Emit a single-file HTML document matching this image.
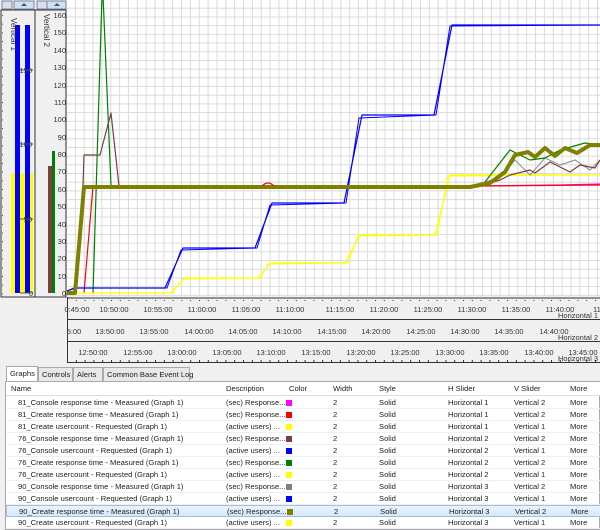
<!DOCTYPE html>
<html><head><meta charset="utf-8">
<style>
*{margin:0;padding:0;box-sizing:border-box}
body{width:600px;height:530px;overflow:hidden;background:#f0f0f0;font-family:"Liberation Sans",sans-serif;font-size:8px;color:#222;position:relative}
svg text{font-family:"Liberation Sans",sans-serif}
.tabs{position:absolute;left:3px;top:366px;height:16px}
.tab{position:absolute;top:1px;height:15px;border:1px solid #aaa;border-bottom:none;background:#e8e8e8;font-size:7.6px;line-height:13px;padding:0 3px;white-space:nowrap}
.tbl{position:absolute;left:5px;top:381px;width:595px;height:149px;background:#fff;border:1px solid #aaa}
.row{position:absolute;left:0;width:595px;height:12px;font-size:7.6px;line-height:12px;border-bottom:1px solid #eef0f3}
.row span{position:absolute;white-space:nowrap}
.hd{background:#fff;border-bottom:1px solid #ddd;height:14px;line-height:14px;top:0}
.sel{background:linear-gradient(#eaf3fd,#d6e8fb);border:1px solid #9bc0e8}
.sw{width:6px;height:6px;top:3px}
</style></head><body>
<svg width="600" height="366" style="position:absolute;left:0;top:0" xmlns="http://www.w3.org/2000/svg">
<defs>
<pattern id="g" x="67" y="0" width="8.85" height="8.7" patternUnits="userSpaceOnUse">
<path d="M8.35 0V8.7M0 8.2H8.85" stroke="#dadada" stroke-width="1" fill="none"/>
</pattern>
<pattern id="tk" x="67" y="0" width="8.8" height="30" patternUnits="userSpaceOnUse">
<path d="M0.5 0V3" stroke="#333" stroke-width="1"/>
</pattern>
<pattern id="vt" x="0" y="6.3" width="10" height="8.7" patternUnits="userSpaceOnUse">
<path d="M0 0.5H3" stroke="#555" stroke-width="1"/>
</pattern>
</defs>
<rect x="0" y="0" width="600" height="366" fill="#f0f0f0"/>
<rect x="67" y="0" width="533" height="296" fill="#fff"/>
<rect x="67" y="0" width="533" height="296" fill="url(#g)"/>
<rect x="1" y="10" width="34" height="287" fill="#f0f0f0" stroke="#333"/>
<rect x="35" y="10" width="31" height="287" fill="#f0f0f0" stroke="#333"/>
<rect x="2" y="1" width="10" height="8" fill="#dde" stroke="#789"/>
<rect x="14" y="1" width="20" height="8" fill="#cfe0f2" stroke="#789"/>
<path d="M21 6L24 3L27 6Z" fill="#456"/>
<rect x="37" y="1" width="10" height="8" fill="#dde" stroke="#789"/>
<rect x="47" y="1" width="19" height="8" fill="#cfe0f2" stroke="#789"/>
<path d="M54 6L57 3L60 6Z" fill="#456"/>
<rect x="11" y="173" width="22" height="120" fill="#ffff00"/>
<rect x="15" y="25" width="5" height="268" fill="#0000ff"/>
<rect x="25" y="25" width="5" height="268" fill="#0000ff"/>
<rect x="48" y="166" width="4" height="127" fill="#7b3f3f"/>
<rect x="52" y="151" width="3" height="142" fill="#008000"/>
<rect x="2" y="10" width="3" height="287" fill="url(#vt)"/>
<rect x="36" y="10" width="3" height="287" fill="url(#vt)"/>
<g stroke="#555"><path d="M20 70H33M20 144H33M20 219H33M20 293H33"/></g>
<g font-size="7.5" fill="#333" text-anchor="end">
<text x="32" y="73">150</text><text x="32" y="147">100</text><text x="32" y="222">50</text><text x="33" y="296">0</text>
</g>
<g font-size="7.5" fill="#333" text-anchor="end">
<text x="66" y="18">160</text><text x="66" y="35">150</text><text x="66" y="53">140</text><text x="66" y="70">130</text><text x="66" y="88">120</text><text x="66" y="105">110</text><text x="66" y="122">100</text><text x="66" y="140">90</text><text x="66" y="157">80</text><text x="66" y="174">70</text><text x="66" y="192">60</text><text x="66" y="209">50</text><text x="66" y="227">40</text><text x="66" y="244">30</text><text x="66" y="261">20</text><text x="66" y="279">10</text><text x="66" y="296">0</text>
</g>
<text transform="translate(11,18) rotate(90)" font-size="8" fill="#333">Vertical 1</text>
<text transform="translate(44,14) rotate(90)" font-size="8" fill="#333">Vertical 2</text>
<g fill="none" stroke-linejoin="round">
<path d="M93 293L102 -5M103 -5L111 186" stroke="#008000" stroke-width="1.2"/>
<path d="M83 186L84 155L100 155L111 113L119 186" stroke="#7b3f3f" stroke-width="1.2"/>
<path d="M84 293L93 186" stroke="#ff0000" stroke-width="1.2"/>
<path d="M67 291L74 288L165 288L183 248L255 248L272 203L344 203L362 115L434 115L452 25L600 25" stroke="#0000ff" stroke-width="1.2"/>
<path d="M67 291L76 288L167 288L181 250L257 248L270 205L346 203L359 118L436 115L450 26L600 25" stroke="#0000ff" stroke-width="1"/>
<path d="M67 293L170 293L185 278L258 278L270 263L345 263L360 235L435 235L450 175L600 175" stroke="#ffff00" stroke-width="1.2"/>
<path d="M67 293L172 293L183 279L260 278L268 264L348 263L358 236L437 235L448 176L600 175" stroke="#ffff00" stroke-width="1"/>
<path d="M120 186L480 186L560 185L600 184" stroke="#ff00ff" stroke-width="1.2"/>
<path d="M480 186L600 185" stroke="#ff0000" stroke-width="1.2"/>
<path d="M470 186L500 178L515 160L530 175L545 158L560 165L575 160L590 170L600 160" stroke="#999" stroke-width="1.2"/>
<path d="M480 186L500 180L510 175L530 170L535 173L550 162L570 172L580 165L595 168L600 160" stroke="#7b3f3f" stroke-width="1.2"/>
<path d="M485 182L510 150L530 160L545 158L560 150L585 143L600 145" stroke="#008000" stroke-width="1.2"/>
<path d="M67 293L75 293L84 187L470 187L490 183L505 172L515 155L528 152L535 157L545 148L555 156L565 148L577 153L590 145L600 145" stroke="#808000" stroke-width="4"/>
<path d="M262 186Q268 180 274 186" stroke="#ff0000" stroke-width="1.2"/>
</g>
<rect x="67" y="297" width="533" height="66" fill="#f0f0f0"/>
<g stroke="#333" stroke-width="1">
<path d="M67 298H600M67 319.5H600M67 341.5H600M67 362.5H600M67.5 297V363"/>
</g>
<rect x="67" y="298" width="533" height="3" fill="url(#tk)"/>
<rect x="67" y="316" width="533" height="3" fill="url(#tk)"/>
<rect x="67" y="320" width="533" height="3" fill="url(#tk)"/>
<rect x="67" y="338" width="533" height="3" fill="url(#tk)"/>
<rect x="67" y="342" width="533" height="3" fill="url(#tk)"/>
<rect x="67" y="359" width="533" height="3" fill="url(#tk)"/>
<g font-size="7.5" fill="#333" text-anchor="middle">
<text x="77" y="312">0:45:00</text><text x="114" y="312">10:50:00</text><text x="158" y="312">10:55:00</text><text x="202" y="312">11:00:00</text><text x="246" y="312">11:05:00</text><text x="290" y="312">11:10:00</text><text x="340" y="312">11:15:00</text><text x="384" y="312">11:20:00</text><text x="428" y="312">11:25:00</text><text x="472" y="312">11:30:00</text><text x="516" y="312">11:35:00</text><text x="560" y="312">11:40:00</text><text x="600" y="312">11:4</text>
<text x="74" y="334">5:00</text><text x="110" y="334">13:50:00</text><text x="154" y="334">13:55:00</text><text x="199" y="334">14:00:00</text><text x="243" y="334">14:05:00</text><text x="287" y="334">14:10:00</text><text x="332" y="334">14:15:00</text><text x="376" y="334">14:20:00</text><text x="421" y="334">14:25:00</text><text x="465" y="334">14:30:00</text><text x="509" y="334">14:35:00</text><text x="554" y="334">14:40:00</text>
<text x="93" y="355">12:50:00</text><text x="138" y="355">12:55:00</text><text x="182" y="355">13:00:00</text><text x="227" y="355">13:05:00</text><text x="271" y="355">13:10:00</text><text x="316" y="355">13:15:00</text><text x="361" y="355">13:20:00</text><text x="405" y="355">13:25:00</text><text x="450" y="355">13:30:00</text><text x="494" y="355">13:35:00</text><text x="539" y="355">13:40:00</text><text x="583" y="355">13:45:00</text>
</g>
<g font-size="7.5" fill="#333">
<text x="558" y="318">Horizontal 1</text><text x="558" y="340">Horizontal 2</text><text x="558" y="361">Horizontal 3</text>
</g>
</svg>
<div class="tabs">
<div class="tab" style="left:3px;top:0;height:16px;background:#fff;width:32px">Graphs</div>
<div class="tab" style="left:35px;width:35px">Controls</div>
<div class="tab" style="left:70px;width:30px">Alerts</div>
<div class="tab" style="left:100px;width:87px">Common Base Event Log</div>
</div>
<div class="tbl">
<div class="row hd"><span style="left:5px">Name</span><span style="left:220px">Description</span><span style="left:283px">Color</span><span style="left:327px">Width</span><span style="left:373px">Style</span><span style="left:442px">H Slider</span><span style="left:508px">V Slider</span><span style="left:564px">More</span></div>
<div class="row" style="top:15px"><span style="left:12px">81_Console response time - Measured (Graph 1)</span><span style="left:220px">(sec) Response...</span><span class="sw" style="left:280px;background:#ff00ff"></span><span style="left:327px">2</span><span style="left:373px">Solid</span><span style="left:442px">Horizontal 1</span><span style="left:508px">Vertical 2</span><span style="left:564px">More</span></div>
<div class="row" style="top:27px"><span style="left:12px">81_Create response time - Measured (Graph 1)</span><span style="left:220px">(sec) Response...</span><span class="sw" style="left:280px;background:#ff0000"></span><span style="left:327px">2</span><span style="left:373px">Solid</span><span style="left:442px">Horizontal 1</span><span style="left:508px">Vertical 2</span><span style="left:564px">More</span></div>
<div class="row" style="top:39px"><span style="left:12px">81_Create usercount - Requested (Graph 1)</span><span style="left:220px">(active users) ...</span><span class="sw" style="left:280px;background:#ffff00"></span><span style="left:327px">2</span><span style="left:373px">Solid</span><span style="left:442px">Horizontal 1</span><span style="left:508px">Vertical 1</span><span style="left:564px">More</span></div>
<div class="row" style="top:51px"><span style="left:12px">76_Console response time - Measured (Graph 1)</span><span style="left:220px">(sec) Response...</span><span class="sw" style="left:280px;background:#7b3f3f"></span><span style="left:327px">2</span><span style="left:373px">Solid</span><span style="left:442px">Horizontal 2</span><span style="left:508px">Vertical 2</span><span style="left:564px">More</span></div>
<div class="row" style="top:63px"><span style="left:12px">76_Console usercount - Requested (Graph 1)</span><span style="left:220px">(active users) ...</span><span class="sw" style="left:280px;background:#0000ff"></span><span style="left:327px">2</span><span style="left:373px">Solid</span><span style="left:442px">Horizontal 2</span><span style="left:508px">Vertical 1</span><span style="left:564px">More</span></div>
<div class="row" style="top:75px"><span style="left:12px">76_Create response time - Measured (Graph 1)</span><span style="left:220px">(sec) Response...</span><span class="sw" style="left:280px;background:#008000"></span><span style="left:327px">2</span><span style="left:373px">Solid</span><span style="left:442px">Horizontal 2</span><span style="left:508px">Vertical 2</span><span style="left:564px">More</span></div>
<div class="row" style="top:87px"><span style="left:12px">76_Create usercount - Requested (Graph 1)</span><span style="left:220px">(active users) ...</span><span class="sw" style="left:280px;background:#ffff00"></span><span style="left:327px">2</span><span style="left:373px">Solid</span><span style="left:442px">Horizontal 2</span><span style="left:508px">Vertical 1</span><span style="left:564px">More</span></div>
<div class="row" style="top:99px"><span style="left:12px">90_Console response time - Measured (Graph 1)</span><span style="left:220px">(sec) Response...</span><span class="sw" style="left:280px;background:#808080"></span><span style="left:327px">2</span><span style="left:373px">Solid</span><span style="left:442px">Horizontal 3</span><span style="left:508px">Vertical 2</span><span style="left:564px">More</span></div>
<div class="row" style="top:111px"><span style="left:12px">90_Console usercount - Requested (Graph 1)</span><span style="left:220px">(active users) ...</span><span class="sw" style="left:280px;background:#0000ff"></span><span style="left:327px">2</span><span style="left:373px">Solid</span><span style="left:442px">Horizontal 3</span><span style="left:508px">Vertical 1</span><span style="left:564px">More</span></div>
<div class="row sel" style="top:123px"><span style="left:12px">90_Create response time - Measured (Graph 1)</span><span style="left:220px">(sec) Response...</span><span class="sw" style="left:280px;background:#808000"></span><span style="left:327px">2</span><span style="left:373px">Solid</span><span style="left:442px">Horizontal 3</span><span style="left:508px">Vertical 2</span><span style="left:564px">More</span></div>
<div class="row" style="top:135px"><span style="left:12px">90_Create usercount - Requested (Graph 1)</span><span style="left:220px">(active users) ...</span><span class="sw" style="left:280px;background:#ffff00"></span><span style="left:327px">2</span><span style="left:373px">Solid</span><span style="left:442px">Horizontal 3</span><span style="left:508px">Vertical 1</span><span style="left:564px">More</span></div>
</div>
</body></html>
